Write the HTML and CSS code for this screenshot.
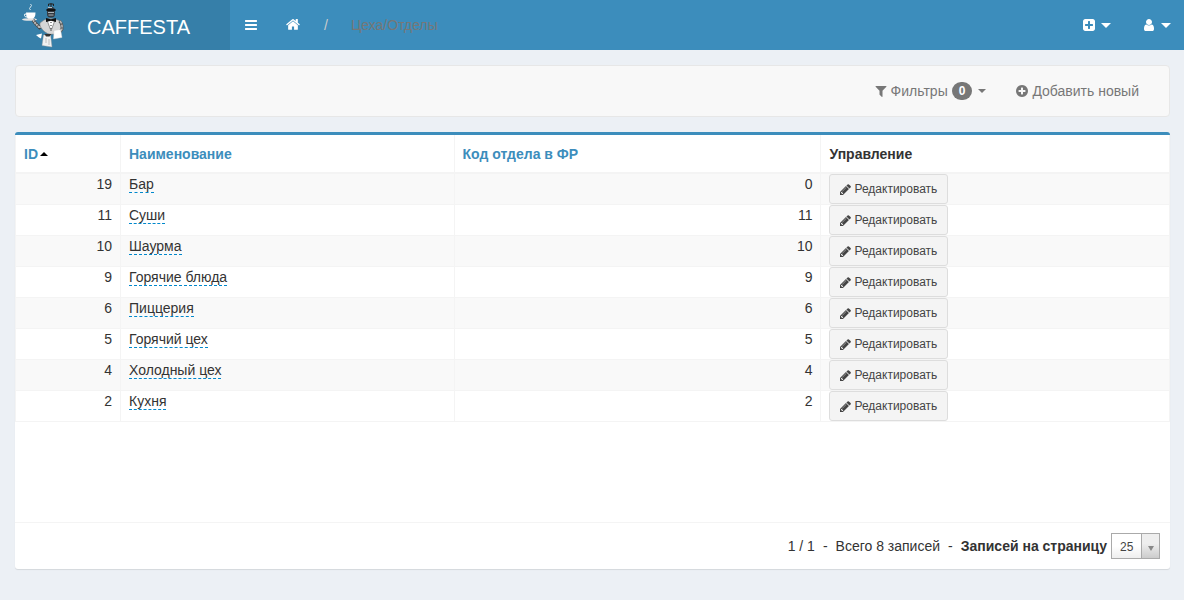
FILE: index.html
```html
<!DOCTYPE html>
<html lang="ru">
<head>
<meta charset="utf-8">
<title>CAFFESTA</title>
<link rel="stylesheet" href="styles.css">
</head>
<body>
<svg class="defs" aria-hidden="true">
  <symbol id="bars" viewBox="0 0 1792 1792"><path d="M1664 1344v128q0 26-19 45t-45 19h-1408q-26 0-45-19t-19-45v-128q0-26 19-45t45-19h1408q26 0 45 19t19 45zm0-512v128q0 26-19 45t-45 19h-1408q-26 0-45-19t-19-45v-128q0-26 19-45t45-19h1408q26 0 45 19t19 45zm0-512v128q0 26-19 45t-45 19h-1408q-26 0-45-19t-19-45v-128q0-26 19-45t45-19h1408q26 0 45 19t19 45z"/></symbol>
  <symbol id="home" viewBox="64 128 1664 1664"><path d="M1472 992v480q0 26-19 45t-45 19h-384v-384h-256v384h-384q-26 0-45-19t-19-45v-480q0-1 .5-3t.5-3l575-474 575 474q1 2 1 6zm223-69l-62 74q-8 9-21 11h-3q-13 0-21-7l-692-577-692 577q-12 8-24 7-13-2-21-11l-62-74q-8-10-7-23.500t11-21.500l719-599q32-26 76-26t76 26l244 204v-195q0-14 9-23t23-9h192q14 0 23 9t9 23v408l219 182q10 8 11 21.500t-7 23.500z"/></symbol>
  <symbol id="plus-square" viewBox="0 0 1792 1792"><path d="M1408 960v-128q0-26-19-45t-45-19h-320v-320q0-26-19-45t-45-19h-128q-26 0-45 19t-19 45v320h-320q-26 0-45 19t-19 45v128q0 26 19 45t45 19h320v320q0 26 19 45t45 19h128q26 0 45-19t19-45v-320h320q26 0 45-19t19-45zm256-544v960q0 119-84.500 203.500t-203.500 84.500h-960q-119 0-203.500-84.500t-84.500-203.500v-960q0-119 84.500-203.500t203.500-84.500h960q119 0 203.500 84.500t84.500 203.500z"/></symbol>
  <symbol id="user" viewBox="0 0 1792 1792"><path d="M1536 1399q0 109-62.500 187t-150.500 78h-854q-88 0-150.500-78t-62.500-187q0-85 8.500-160.500t31.500-152 58.500-131 94-89 134.500-34.500q131 128 313 128t313-128q76 0 134.500 34.500t94 89 58.500 131 31.500 152 8.500 160.500zm-256-887q0 159-112.500 271.500t-271.500 112.500-271.500-112.500-112.500-271.500 112.500-271.500 271.500-112.500 271.500 112.500 112.500 271.500z"/></symbol>
  <symbol id="filter" viewBox="0 0 1792 1792"><path d="M1595 295q17 41-14 70l-493 493v742q0 42-39 59-13 5-25 5-27 0-45-19l-256-256q-19-19-19-45v-486l-493-493q-31-29-14-70 17-39 59-39h1280q42 0 59 39z"/></symbol>
  <symbol id="plus-circle" viewBox="0 0 1792 1792"><path d="M1344 960v-128q0-26-19-45t-45-19h-256v-256q0-26-19-45t-45-19h-128q-26 0-45 19t-19 45v256h-256q-26 0-45 19t-19 45v128q0 26 19 45t45 19h256v256q0 26 19 45t45 19h128q26 0 45-19t19-45v-256h256q26 0 45-19t19-45zm320-64q0 209-103 385.500t-279.500 279.500-385.500 103-385.500-103-279.500-279.500-103-385.500 103-385.500 279.500-279.500 385.500-103 385.500 103 279.500 279.500 103 385.500z"/></symbol>
  <symbol id="pencil" viewBox="128 128 1536 1536"><path d="M491 1536l91-91-235-235-91 91v107h128v128h107zm523-928q0-22-22-22-10 0-17 7l-542 542q-7 7-7 17 0 22 22 22 10 0 17-7l542-542q7-7 7-17zm-54-192l416 416-832 832h-416v-416zm683 96q0 53-37 90l-166 166-416-416 166-165q36-38 90-38 53 0 91 38l235 234q37 39 37 91z"/></symbol>
</svg>

<header class="topbar">
  <a class="brand" href="#">
    <svg class="brand-logo" viewBox="0 0 46 48" aria-hidden="true">
      <path d="M9.500 9q-2-1.500 0-3t0-3" fill="none" stroke="#d7e6ee" stroke-width="1"/>
      <path d="M5 11.500h9.500q0 5-3 6.500h-4q-2.500-1.500-2.500-6.500z" fill="#fff"/>
      <path d="M5.500 13q-2.500-.5-2 1.500t3 1.500" fill="none" stroke="#fff"/>
      <ellipse cx="8.500" cy="18.500" rx="7.500" ry="1.300" fill="#e4e4e4"/>
      <path d="M12 19l2.500 3.500 4 4 5-4" fill="none" stroke="#444" stroke-width="3.200"/>
      <path d="M12 19l2.500 3.500 4 4 5-4" fill="none" stroke="#bbb" stroke-width="2" stroke-dasharray="2 .6"/>
      <path d="M23 19q6-3 14 0 5 2 4 8l-5 5q-7 3-12-1-6-5-5-9z" fill="#d6d6d6" stroke="#777" stroke-width=".5"/>
      <path d="M38.500 20q3 3 2.500 8l-3 4" fill="none" stroke="#555" stroke-width="3"/>
      <path d="M39 20q2.500 3 2 8l-3 4" fill="none" stroke="#bbb" stroke-width="1.500" stroke-dasharray="3 1"/>
      <path d="M26 19l4 11 4-11z" fill="#fff" stroke="#555" stroke-width=".6"/>
      <path d="M30 21v1m0 2v1m0 2v1" stroke="#222"/>
      <path d="M25 17l5 1.300 5-1.300v4l-5-1.300-5 1.300z" fill="#111"/>
      <rect x="26" y="6" width="8" height="10.500" rx="3.500" fill="#343a40"/>
      <path d="M27 11h6v1h-6zm.5 2.500h5v1h-5z" fill="#aab4ba"/>
      <path d="M25.500 8h9v2h-9z" fill="#111"/>
      <path d="M27 6.500h4" stroke="#b7bec4"/>
      <path d="M27.500 5V3h5v2M30 6V2" fill="none" stroke="#222"/>
      <path d="M33 29.500l6.500-1 1.500 8-8.500 1.500z" fill="#fff" stroke="#ccc" stroke-width=".4"/>
      <path d="M15 34l6-1.500-1 5-2-1z" fill="#fff"/>
      <path d="M22.500 34l7-.5 1.500 12.500-10-1.500z" fill="#f1f1f1" stroke="#999" stroke-width=".4"/>
      <path d="M23.500 33h7l-2 2.500h-3.500z" fill="#333"/>
      <path d="M25 37v5m3-4v6" stroke="#aaa" stroke-width=".7"/>
    </svg>
    <span>CAFFESTA</span>
  </a>
  <nav class="crumbs">
    <button class="bar-btn" type="button" aria-label="Меню"><svg class="icon"><use href="#bars"/></svg></button>
    <a class="bar-btn" href="#" aria-label="Главная"><svg class="icon"><use href="#home"/></svg></a>
    <span class="slash">/</span>
    <span class="current">Цеха/Отделы</span>
  </nav>
  <div class="actions">
    <button class="bar-btn" type="button" aria-label="Создать"><svg class="icon"><use href="#plus-square"/></svg><i class="caret"></i></button>
    <button class="bar-btn" type="button" aria-label="Профиль"><svg class="icon"><use href="#user"/></svg><i class="caret"></i></button>
  </div>
</header>

<main class="content">
  <div class="toolbar">
    <button class="tool" type="button"><svg class="icon"><use href="#filter"/></svg><span>Фильтры</span><span class="badge">0</span><i class="caret"></i></button>
    <a class="tool" href="#"><svg class="icon"><use href="#plus-circle"/></svg><span>Добавить новый</span></a>
  </div>

  <section class="box">
    <div class="box-body">
      <table class="grid">
        <colgroup><col class="c-id"><col class="c-name"><col class="c-code"><col></colgroup>
        <thead>
          <tr><th><a href="#">ID<i class="sort"></i></a></th><th><a href="#">Наименование</a></th><th><a href="#">Код отдела в ФР</a></th><th>Управление</th></tr>
        </thead>
        <tbody>
          <tr><td class="num">19</td><td><a class="edit" href="#">Бар</a></td><td class="num">0</td><td><button class="btn" type="button"><svg class="icon"><use href="#pencil"/></svg>Редактировать</button></td></tr>
          <tr><td class="num">11</td><td><a class="edit" href="#">Суши</a></td><td class="num">11</td><td><button class="btn" type="button"><svg class="icon"><use href="#pencil"/></svg>Редактировать</button></td></tr>
          <tr><td class="num">10</td><td><a class="edit" href="#">Шаурма</a></td><td class="num">10</td><td><button class="btn" type="button"><svg class="icon"><use href="#pencil"/></svg>Редактировать</button></td></tr>
          <tr><td class="num">9</td><td><a class="edit" href="#">Горячие блюда</a></td><td class="num">9</td><td><button class="btn" type="button"><svg class="icon"><use href="#pencil"/></svg>Редактировать</button></td></tr>
          <tr><td class="num">6</td><td><a class="edit" href="#">Пиццерия</a></td><td class="num">6</td><td><button class="btn" type="button"><svg class="icon"><use href="#pencil"/></svg>Редактировать</button></td></tr>
          <tr><td class="num">5</td><td><a class="edit" href="#">Горячий цех</a></td><td class="num">5</td><td><button class="btn" type="button"><svg class="icon"><use href="#pencil"/></svg>Редактировать</button></td></tr>
          <tr><td class="num">4</td><td><a class="edit" href="#">Холодный цех</a></td><td class="num">4</td><td><button class="btn" type="button"><svg class="icon"><use href="#pencil"/></svg>Редактировать</button></td></tr>
          <tr><td class="num">2</td><td><a class="edit" href="#">Кухня</a></td><td class="num">2</td><td><button class="btn" type="button"><svg class="icon"><use href="#pencil"/></svg>Редактировать</button></td></tr>
        </tbody>
      </table>
    </div>
    <footer class="box-footer">
      <span>1 / 1</span><span>-</span><span>Всего 8 записей</span><span>-</span>
      <div class="per-page">
        <label for="per-page">Записей на страницу</label>
        <span class="picker">
          <select id="per-page"><option>25</option></select>
          <span class="picker-arrow"></span>
        </span>
      </div>
    </footer>
  </section>
</main>
</body>
</html>
```
FILE: styles.css
```css
* { box-sizing: border-box; }
body {
  margin: 0;
  min-height: 100vh;
  background: #ecf0f5;
  color: #333;
  font: 14px/20px "Liberation Sans", Arial, sans-serif;
}
a { color: #3c8dbc; text-decoration: none; }
button { font: inherit; cursor: pointer; }
.defs { position: absolute; width: 0; height: 0; }
.icon { width: 14px; height: 14px; fill: currentColor; flex: none; }
.caret {
  border: 4px solid transparent;
  border-top-color: currentColor;
  border-bottom: 0;
}

.topbar { display: flex; height: 50px; background: #3c8dbc; color: #fff; }
.brand {
  display: flex;
  align-items: center;
  gap: 20px;
  width: 230px;
  padding: 4px 20px 0 21px;
  background: #367fa9;
  color: #fff;
  font-size: 20px;
}
.brand-logo { width: 46px; height: 48px; margin-top: -4px; }
.crumbs, .actions { display: flex; align-items: center; }
.actions { margin-left: auto; }
.bar-btn {
  display: flex;
  align-items: center;
  height: 50px;
  padding: 0 14px;
  border: 0;
  background: none;
  color: #fff;
}
.actions .bar-btn { gap: 5px; padding: 0 14px 0 18px; }
.actions .caret { border-width: 5px 5px 0; margin-right: -1px; }
.crumbs .slash { padding: 0 10px; color: #ccc; }
.current { padding-left: 13px; color: #777; }

.content { padding: 15px 14px 15px 15px; }
.toolbar {
  display: flex;
  justify-content: flex-end;
  margin-bottom: 15px;
  padding: 0 15px;
  min-height: 52px;
  background: #f8f8f8;
  border: 1px solid #e7e7e7;
  border-radius: 4px;
}
.tool {
  display: flex;
  align-items: center;
  gap: 3px;
  padding: 0 15px 0 14px;
  border: 0;
  background: none;
  color: #777;
}
.badge {
  min-width: 10px;
  margin: 0 3px 0 1px;
  padding: 3px 7px;
  border-radius: 10px;
  background: #777;
  color: #fff;
  font-size: 12px;
  font-weight: bold;
  line-height: 12px;
}

.box {
  background: #fff;
  border-top: 3px solid #3c8dbc;
  border-radius: 3px;
  box-shadow: 0 1px 1px rgba(0, 0, 0, 0.1);
}
.box-body { padding-bottom: 100px; }
.grid { width: 100%; border-collapse: collapse; table-layout: fixed; }
.c-id { width: 9.1%; }
.c-name { width: 28.9%; }
.c-code { width: 31.8%; }
.grid th, .grid td { border: 1px solid #f4f4f4; text-align: left; vertical-align: top; }
.grid th { padding: 9px 8px 8px; border-top: 0; border-bottom-width: 2px; }
.grid td { padding: 0 8px; }
.grid tbody tr:nth-child(odd) { background: #f9f9f9; }
.grid .num { text-align: right; }
.sort {
  display: inline-block;
  margin: 0 0 3px 2px;
  border: 4px solid transparent;
  border-top: 0;
  border-bottom-color: #000;
}
.edit { color: #333; border-bottom: 1px dashed #08c; }
.btn {
  display: flex;
  align-items: center;
  gap: 3px;
  padding: 5px 10px;
  background: #f4f4f4;
  border: 1px solid #ddd;
  border-radius: 3px;
  color: #444;
  font-size: 12px;
  line-height: 18px;
}
.btn .icon { width: 11px; height: 11px; }

.box-footer {
  display: flex;
  justify-content: flex-end;
  align-items: center;
  gap: 8px;
  padding: 10px;
  border-top: 1px solid #f4f4f4;
  border-radius: 0 0 3px 3px;
}
.per-page { display: flex; align-items: center; gap: 4px; }
.per-page label { font-weight: bold; }
.picker { position: relative; display: flex; }
.picker select {
  appearance: none;
  width: 49px;
  height: 26px;
  padding: 1px 20px 0 8px;
  border: 1px solid #aaa;
  border-radius: 0;
  background: linear-gradient(#fff 50%, #eee);
  color: #444;
  font: 12px/24px "Liberation Sans", Arial, sans-serif;
}
.picker-arrow {
  position: absolute;
  top: 1px;
  right: 1px;
  bottom: 1px;
  display: flex;
  align-items: center;
  justify-content: center;
  width: 18px;
  border-left: 1px solid #aaa;
  background: linear-gradient(#eee 40%, #ccc);
  pointer-events: none;
}
.picker-arrow::after {
  content: "";
  margin-top: 4px;
  border: 3px solid transparent;
  border-top: 5px solid #888;
  border-bottom: 0;
}
```
